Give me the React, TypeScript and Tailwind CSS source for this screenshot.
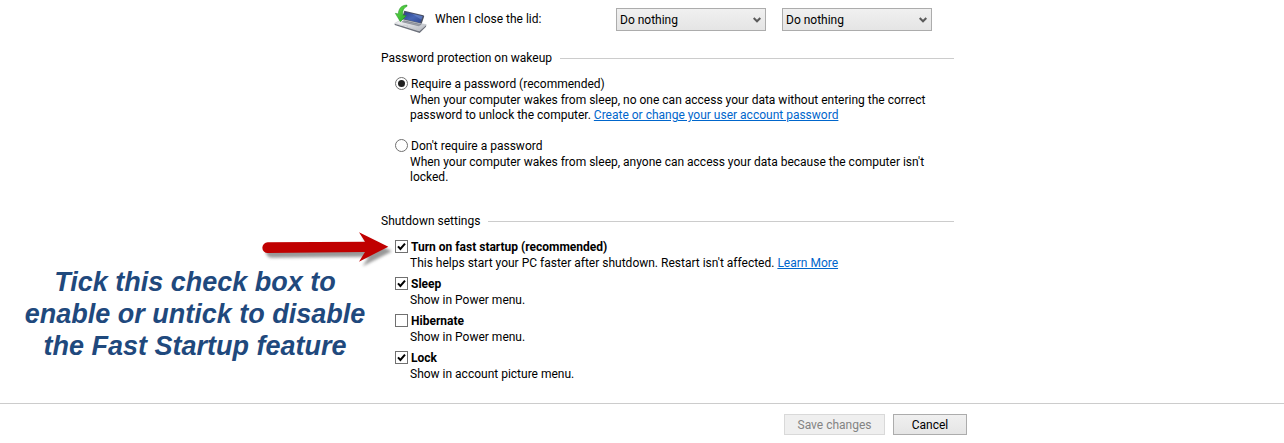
import { useId, useState, type ReactNode } from "react";

function LidIcon() {
  return (
    <svg viewBox="42 9 99 90" className="h-[30px] w-[33px] shrink-0" aria-hidden="true">
      <defs>
        <linearGradient id="lid-screen" x1="0" y1="0" x2="1" y2="1">
          <stop offset="0" stopColor="#2a3f8a" />
          <stop offset="0.5" stopColor="#4766b4" />
          <stop offset="1" stopColor="#2f4690" />
        </linearGradient>
        <linearGradient id="lid-base" x1="0" y1="0" x2="1" y2="1">
          <stop offset="0" stopColor="#fafafb" />
          <stop offset="1" stopColor="#b4b8bf" />
        </linearGradient>
        <linearGradient id="lid-arrow" x1="0" y1="0" x2="1" y2="1">
          <stop offset="0" stopColor="#6fe04f" />
          <stop offset="1" stopColor="#1fa824" />
        </linearGradient>
      </defs>
      <path d="M73 29 L130 43 Q134 45 132 48 L124 71 L64 56 Z" fill="#4a5064" />
      <path d="M76 33 L128 46 L120 66 L70 53 Z" fill="url(#lid-screen)" />
      <path d="M96 38 L128 46 L124 56 Z" fill="#7d98d8" opacity="0.45" />
      <path d="M44 67 L66 55 L139 71 L118 90 Z" fill="url(#lid-base)" stroke="#a2a6ae" strokeWidth="1" />
      <path d="M64 63 L72 58 L125 70 L117 76 Z" fill="#858a94" />
      <path d="M67 61 L120 73" stroke="#c9ccd2" strokeWidth="1" />
      <path d="M72 72 L84 75 L78 80 L66 77 Z" fill="#dcdee2" stroke="#a2a6ae" strokeWidth="0.8" />
      <path d="M44 68 L118 91 L139 72 L138 77 L119 96 L44 72 Z" fill="#6d717b" />
      <path
        d="M81 12 C63 13 56 23 55 39 L46 37 L61 62 L79 44 L68 42 C67 29 71 20 81 16 Z"
        fill="url(#lid-arrow)"
        stroke="#1c8c20"
        strokeWidth="1.5"
      />
    </svg>
  );
}

function PointerArrow() {
  return (
    <svg
      viewBox="36 78 390 114"
      className="pointer-events-none absolute right-full top-[-6px] mr-[3px] h-[38px] w-[130px] overflow-visible"
      aria-hidden="true"
    >
      <defs>
        <filter id="arrow-shadow" x="-10%" y="-30%" width="125%" height="180%">
          <feGaussianBlur stdDeviation="5" />
        </filter>
      </defs>
      <path
        d="M53 112 L345 110 L327 82 L415 125 L327 170 L345 141 L53 144 A16 16 0 0 1 53 112 Z"
        fill="#555555"
        opacity="0.6"
        transform="translate(11 14)"
        filter="url(#arrow-shadow)"
      />
      <path
        d="M53 112 L345 110 L327 82 L415 125 L327 170 L345 141 L53 144 A16 16 0 0 1 53 112 Z"
        fill="#c00000"
      />
    </svg>
  );
}

function ActionSelect({ label }: { label: string }) {
  return (
    <div className="relative w-[150px]">
      <select
        aria-label={label}
        defaultValue="Do nothing"
        className="h-[23px] w-full appearance-none border border-[#acacac] bg-linear-to-b from-[#f0f0f0] to-[#e5e5e5] pl-[3px] pr-6 pt-px text-xs leading-4 text-black"
      >
        <option>Do nothing</option>
        <option>Sleep</option>
        <option>Hibernate</option>
        <option>Shut down</option>
      </select>
      <svg
        viewBox="0 0 8 6"
        className="pointer-events-none absolute right-[5px] top-[9px] h-[6px] w-[8px]"
        aria-hidden="true"
      >
        <path d="M0.7 1 L4 4.3 L7.3 1" fill="none" stroke="#5a5a5a" strokeWidth="2" />
      </svg>
    </div>
  );
}

function Section({ title, children }: { title: string; children: ReactNode }) {
  return (
    <section>
      <div className="flex items-center gap-2">
        <h2 className="leading-4">{title}</h2>
        <div className="h-px flex-1 bg-[#cccccc]" />
      </div>
      <div className="pl-[14px]">{children}</div>
    </section>
  );
}

function Description({ id, children }: { id: string; children: ReactNode }) {
  return (
    <p id={id} className="pl-[15px] leading-[15px]">
      {children}
    </p>
  );
}

function RadioOption(props: { label: string; checked: boolean; onSelect: () => void; children: ReactNode }) {
  const id = useId();
  return (
    <div>
      <div className="flex h-[19px] items-center gap-[3px]">
        <span className="grid h-[13px] w-[13px] place-items-center">
          <input
            type="radio"
            id={id}
            name="wakeup-password"
            checked={props.checked}
            onChange={props.onSelect}
            aria-describedby={id + "-text"}
            className="peer col-start-1 row-start-1 h-[13px] w-[13px] appearance-none rounded-full border border-[#707070] bg-white"
          />
          <span className="pointer-events-none col-start-1 row-start-1 hidden h-[7px] w-[7px] rounded-full bg-[#212121] peer-checked:block" />
        </span>
        <label htmlFor={id}>{props.label}</label>
      </div>
      <Description id={id + "-text"}>{props.children}</Description>
    </div>
  );
}

function CheckOption(props: { label: string; defaultChecked?: boolean; marker?: ReactNode; children: ReactNode }) {
  const id = useId();
  return (
    <div>
      <div className="relative flex h-[19px] items-center gap-[3px]">
        {props.marker}
        <span className="grid h-[13px] w-[13px] place-items-center">
          <input
            type="checkbox"
            id={id}
            defaultChecked={props.defaultChecked}
            aria-describedby={id + "-text"}
            className="peer col-start-1 row-start-1 h-[13px] w-[13px] appearance-none border border-[#707070] bg-white"
          />
          <svg
            viewBox="0 0 13 13"
            className="pointer-events-none col-start-1 row-start-1 hidden h-[13px] w-[13px] peer-checked:block"
            aria-hidden="true"
          >
            <path d="M3 6.3 L5.4 9 L10 3.6" fill="none" stroke="#000000" strokeWidth="2" />
          </svg>
        </span>
        <label htmlFor={id} className="font-bold">
          {props.label}
        </label>
      </div>
      <Description id={id + "-text"}>{props.children}</Description>
    </div>
  );
}

function TextLink({ children }: { children: ReactNode }) {
  return (
    <a href="#" className="text-[#0066cc] underline">
      {children}
    </a>
  );
}

export default function App() {
  const [requirePassword, setRequirePassword] = useState(true);
  return (
    <div className="bg-white font-['Roboto','Noto_Sans',sans-serif] text-xs leading-4 text-black">
      <div className="flex pb-[21px]">
        <aside className="w-[381px] shrink-0 pl-[9px] pt-[266px]">
          <p className="text-center font-['Liberation_Sans',Arial,sans-serif] text-[27px] font-bold italic leading-8 text-[#1f497d]">
            Tick this check box to
            <br />
            enable or untick to disable
            <br />
            the Fast Startup feature
          </p>
        </aside>

        <main className="max-w-[573px] flex-1">
          <div className="flex items-center pl-[13px] pr-[22px] pt-1">
            <LidIcon />
            <span className="flex-1 pl-2">When I close the lid:</span>
            <div className="flex gap-4">
              <ActionSelect label="When I close the lid, on battery" />
              <ActionSelect label="When I close the lid, plugged in" />
            </div>
          </div>

          <div className="flex flex-col gap-7 pt-4">
            <Section title="Password protection on wakeup">
              <div className="flex flex-col gap-[13px] pt-2">
                <RadioOption
                  label="Require a password (recommended)"
                  checked={requirePassword}
                  onSelect={() => setRequirePassword(true)}
                >
                  When your computer wakes from sleep, no one can access your data without entering the correct
                  password to unlock the computer. <TextLink>Create or change your user account password</TextLink>
                </RadioOption>
                <RadioOption
                  label="Don't require a password"
                  checked={!requirePassword}
                  onSelect={() => setRequirePassword(false)}
                >
                  When your computer wakes from sleep, anyone can access your data because the computer isn't
                  locked.
                </RadioOption>
              </div>
            </Section>

            <Section title="Shutdown settings">
              <div className="flex flex-col gap-[3px] pt-2">
                <CheckOption label="Turn on fast startup (recommended)" defaultChecked marker={<PointerArrow />}>
                  This helps start your PC faster after shutdown. Restart isn't affected. <TextLink>Learn More</TextLink>
                </CheckOption>
                <CheckOption label="Sleep" defaultChecked>
                  Show in Power menu.
                </CheckOption>
                <CheckOption label="Hibernate">Show in Power menu.</CheckOption>
                <CheckOption label="Lock" defaultChecked>
                  Show in account picture menu.
                </CheckOption>
              </div>
            </Section>
          </div>
        </main>
      </div>

      <footer className="border-t border-[#cccccc] pb-2 pt-[10px]">
        <div className="flex max-w-[967px] justify-end gap-2">
          <button
            type="button"
            disabled
            className="h-[21px] w-[101px] border border-[#d9d9d9] bg-[#efefef] leading-4 text-[#838383]"
          >
            Save changes
          </button>
          <button
            type="button"
            className="h-[21px] w-[74px] border border-[#acacac] bg-linear-to-b from-[#f0f0f0] to-[#e5e5e5] leading-4"
          >
            Cancel
          </button>
        </div>
      </footer>
    </div>
  );
}
